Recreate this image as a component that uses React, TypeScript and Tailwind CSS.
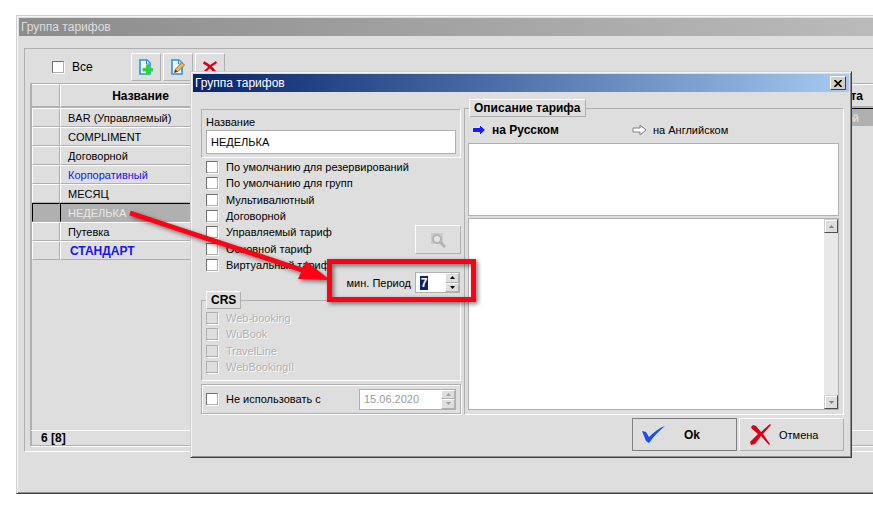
import { ReactNode, useState } from 'react';
import clsx from 'clsx';

interface Tariff {
  id: number;
  name: string;
  tone?: 'link' | 'strong';
}

const tariffs: Tariff[] = [
  { id: 1, name: 'BAR (Управляемый)' },
  { id: 2, name: 'COMPLIMENT' },
  { id: 3, name: 'Договорной' },
  { id: 4, name: 'Корпоративный', tone: 'link' },
  { id: 5, name: 'МЕСЯЦ' },
  { id: 6, name: 'НЕДЕЛЬКА' },
  { id: 7, name: 'Путевка' },
  { id: 8, name: 'СТАНДАРТ', tone: 'strong' },
];

const options = [
  'По умолчанию для резервирований',
  'По умолчанию для групп',
  'Мультивалютный',
  'Договорной',
  'Управляемый тариф',
  'Основной тариф',
  'Виртуальный тариф',
];

const channels = ['Web-booking', 'WuBook', 'TravelLine', 'WebBookingII'];

const raised = 'border border-t-white border-l-white border-r-[#b0b0b0] border-b-[#b0b0b0]';
const frame = 'border border-[#b0b0b0] shadow-[1px_1px_0_#fff,inset_1px_1px_0_#fff]';

function CheckRow({ label, disabled }: { label: string; disabled?: boolean }) {
  return (
    <label className={clsx('flex h-4 items-center gap-2', disabled && 'text-[#b0b0b0] [text-shadow:1px_1px_0_#fff]')}>
      <input
        type="checkbox"
        disabled={disabled}
        className="size-3 shrink-0 appearance-none border border-t-[#707070] border-r-[#b0b0b0] border-b-[#b0b0b0] border-l-[#707070] bg-white shadow-[1px_1px_0_#fff] checked:bg-[#0a246a] disabled:border-[#b0b0b0] disabled:bg-[#dedede]"
      />
      {label}
    </label>
  );
}

function ToolButton({ title, children }: { title: string; children: ReactNode }) {
  return (
    <button aria-label={title} className={clsx('flex h-7 w-[30px] items-center justify-center', raised)}>
      {children}
    </button>
  );
}

function PageShape() {
  return (
    <>
      <path d="M2 1h7l3 3v11H2z" fill="#fff" stroke="#2b8ee6" strokeWidth="1.6" />
      <path d="M8.500 1v4H12" fill="#cfe6fb" stroke="#2b8ee6" />
    </>
  );
}

function Spinner({ disabled }: { disabled?: boolean }) {
  const button = clsx('flex flex-1 items-center justify-center', raised);
  const fill = disabled ? '#a0a0a0' : '#000';
  return (
    <span className="flex w-[14px] shrink-0 flex-col bg-[#dedede]">
      <button aria-label="Больше" disabled={disabled} className={button}>
        <svg width="5" height="3" viewBox="0 0 5 3"><path d="M0 3h5L2.500 0z" fill={fill} /></svg>
      </button>
      <button aria-label="Меньше" disabled={disabled} className={button}>
        <svg width="5" height="3" viewBox="0 0 5 3"><path d="M0 0h5L2.500 3z" fill={fill} /></svg>
      </button>
    </span>
  );
}

function ScrollButton({ up }: { up?: boolean }) {
  return (
    <button
      aria-label={up ? 'Вверх' : 'Вниз'}
      disabled
      className="flex h-[14px] w-[14px] items-center justify-center border border-t-[#d0d0d0] border-r-[#505050] border-b-[#505050] border-l-[#d0d0d0] bg-[#dedede] shadow-[inset_1px_1px_0_#fff]"
    >
      <svg width="5" height="3" viewBox="0 0 5 3">
        <path d={up ? 'M0 3h5L2.500 0z' : 'M0 0h5L2.500 3z'} fill="#808080" />
      </svg>
    </button>
  );
}

function TariffList() {
  const [selected, setSelected] = useState(6);

  return (
    <div className="mt-3 ml-[5px] border-t border-b border-l border-t-[#b0b0b0] border-b-white border-l-[#b0b0b0] pb-1 pl-[5px]">
      <div className="flex h-[34px] items-start gap-[2px] pt-1 pl-[22px]">
        <label className="flex h-7 w-[77px] items-center gap-2 text-xs">
          <input
            type="checkbox"
            className="size-3 appearance-none border border-t-[#707070] border-r-[#b0b0b0] border-b-[#b0b0b0] border-l-[#707070] bg-white shadow-[1px_1px_0_#fff] checked:bg-[#0a246a]"
          />
          Все
        </label>
        <ToolButton title="Добавить">
          <svg width="16" height="16" viewBox="0 0 16 16">
            <PageShape />
            <path d="M8 5.500h3.500V9H15v3.500h-3.500V16H8v-3.500H4.500V9H8z" fill="#2fd23c" />
          </svg>
        </ToolButton>
        <ToolButton title="Изменить">
          <svg width="16" height="16" viewBox="0 0 16 16">
            <PageShape />
            <path d="M4.500 13.500l1-3.500L12 3.500l2.500 2.500L8 12.500z" fill="#f2b75c" stroke="#8a5a20" strokeWidth=".8" />
            <path d="M4.500 13.500l1-3 2 2z" fill="#333" />
          </svg>
        </ToolButton>
        <ToolButton title="Удалить">
          <svg width="14" height="12" viewBox="0 0 14 12" stroke="#d8001a" fill="none">
            <path d="M.5 1.500c4.500 2 8 5 11.500 9.500" strokeWidth="2.800" />
            <path d="M13.500 1C8 4 5 7 1.500 11" strokeWidth="2.200" />
          </svg>
        </ToolButton>
      </div>

      <div className="border-t border-b border-l border-t-[#b0b0b0] border-b-white border-l-[#b0b0b0] shadow-[inset_1px_0_0_#b0b0b0]">
        <div className="flex min-h-[346px] items-start pl-px">
          <table className="w-[190px] shrink-0 table-fixed border-separate border-spacing-0">
            <colgroup>
              <col className="w-[28px]" />
              <col />
            </colgroup>
            <thead>
              <tr className="h-6">
                <th className="border-t border-r border-b-2 border-t-white border-r-[#b0b0b0] border-b-[#b0b0b0]" />
                <th className="border-t border-b-2 border-l border-t-white border-b-[#b0b0b0] border-l-white pr-[2px] text-xs">Название</th>
              </tr>
            </thead>
            <tbody>
              {tariffs.map((tariff) => {
                const active = tariff.id === selected;
                const cell = active
                  ? 'border-t border-t-black border-l-black border-b-[#b0b0b0] bg-[#b0b0b0] text-[#e8e8e8]'
                  : 'border-t border-t-white border-l-white border-b-[#b0b0b0]';
                return (
                  <tr key={tariff.id} className="h-[19px]" onClick={() => setSelected(tariff.id)}>
                    <td className={clsx('border-r border-b border-l border-r-[#b0b0b0] p-0', cell)} />
                    <td
                      className={clsx(
                        'border-b border-l py-0 pr-0 whitespace-nowrap',
                        cell,
                        tariff.tone === 'strong' ? 'pl-[9px] text-xs font-bold' : 'pl-[7px]',
                        tariff.tone && !active && 'text-[#1414f0]',
                      )}
                    >
                      {tariff.name}
                    </td>
                  </tr>
                );
              })}
            </tbody>
          </table>
          <table className="grow border-separate border-spacing-0">
            <thead>
              <tr className="h-6">
                <th className="border-t border-b-2 border-t-white border-b-[#b0b0b0] py-0 pr-[10px] text-right text-xs">та</th>
              </tr>
            </thead>
            <tbody>
              <tr className="h-[18px]">
                <td className="border-t border-black bg-[#b0b0b0] py-0 pr-[14px] text-right text-[#e8e8e8]">ой</td>
              </tr>
            </tbody>
          </table>
        </div>
        <div className="h-4 border-t border-b border-t-white border-b-[#b0b0b0] pl-[10px] text-xs leading-[15px] font-bold">6 [8]</div>
      </div>
    </div>
  );
}

function TariffDialog() {
  const [name, setName] = useState('НЕДЕЛЬКА');

  return (
    <div
      role="dialog"
      aria-label="Группа тарифов"
      className="absolute top-[71px] right-[21px] left-[190px] border border-t-[#d0d0d0] border-r-[#404040] border-b-[#404040] border-l-[#d0d0d0] bg-[#dedede] p-[2px] shadow-[inset_1px_1px_0_#f4f4f4,inset_-1px_-1px_0_#909090]"
    >
      <header className="flex h-[18px] items-center justify-between bg-linear-to-r from-[#0a246a] to-[#a6caf0] pr-[3px] pl-[2px] text-white">
        <h2 className="text-xs">Группа тарифов</h2>
        <button aria-label="Закрыть" className="flex h-[14px] w-4 items-center justify-center border border-t-white border-r-[#404040] border-b-[#404040] border-l-white bg-[#d4d0c8]">
          <svg width="8" height="7" viewBox="0 0 8 7"><path d="M0.500 0l7 7M7.500 0l-7 7" stroke="#000" strokeWidth="1.600" /></svg>
        </button>
      </header>

      <div className="flex gap-[3px] pt-[7px] pr-[5px] pl-2">
        <div className="flex w-[260px] shrink-0 flex-col pt-[10px]">
          <div className="h-[49px] border border-t-[#b0b0b0] border-r-white border-b-white border-l-[#b0b0b0] px-1 pt-1">
            <label htmlFor="tariff-name" className="block h-4 leading-4">Название</label>
            <input
              id="tariff-name"
              value={name}
              onChange={(e) => setName(e.target.value)}
              className="block h-6 w-full border border-[#b0b0b0] bg-white px-1 outline-none"
            />
          </div>

          <div className="flex justify-between">
            <div className="flex h-[115px] flex-col justify-between pt-px pl-[5px]">
              {options.map((option) => (
                <CheckRow key={option} label={option} />
              ))}
            </div>
            <button aria-label="Поиск" disabled className={clsx('mt-[67px] flex h-[29px] w-[46px] items-center justify-center', raised)}>
              <svg width="18" height="18" viewBox="0 0 18 18" fill="none" stroke="#b4b4b4">
                <path d="M2 2h12v11H2z" fill="#cacaca" stroke="none" />
                <circle cx="8" cy="8" r="4" fill="#e4e4e4" strokeWidth="2" />
                <path d="M11 11l5 5" strokeWidth="3" />
              </svg>
            </button>
          </div>

          <div className="-mt-px flex justify-end pr-px">
            <label className="flex items-center gap-1">
              мин. Период
              <span className="flex h-[21px] w-[45px] border border-[#b0b0b0] bg-white">
                <span className="flex w-[29px] items-center pl-1">
                  <input type="text" defaultValue="7" className="h-[14px] w-2 bg-[#0a246a] text-center text-xs leading-[14px] font-bold text-white outline-none" />
                </span>
                <Spinner />
              </span>
            </label>
          </div>

          <fieldset className="-mt-[2px] border border-t-[#b0b0b0] border-r-white border-b-white border-l-[#b0b0b0] pr-2 pb-[5px] pl-1">
            <legend className={clsx('h-[18px] px-1 text-xs leading-4 font-bold', raised)}>CRS</legend>
            <div className="flex h-[66px] flex-col justify-between pt-px">
              {channels.map((channel) => (
                <CheckRow key={channel} label={channel} disabled />
              ))}
            </div>
          </fieldset>

          <div className={clsx('mt-[3px] flex h-[30px] items-center justify-between pr-1 pl-1', frame)}>
            <CheckRow label="Не использовать с" />
            <span className="flex h-[21px] w-[97px] border border-[#b0b0b0] bg-white">
              <input aria-label="Дата" disabled defaultValue="15.06.2020" className="min-w-0 flex-1 pl-1 text-[#9a9a9a]" />
              <Spinner disabled />
            </span>
          </div>
        </div>

        <fieldset className="flex min-w-0 flex-1 flex-col border border-t-[#b0b0b0] border-r-white border-b-white border-l-[#b0b0b0] pr-1 pb-1 pl-[3px]">
          <legend className={clsx('ml-px h-[18px] px-1 text-xs leading-4 font-bold', raised)}>Описание тарифа</legend>
          <div className="flex h-[26px] items-center pl-1">
            <button className="flex w-40 items-center gap-[6px] text-xs font-bold">
              <svg width="14" height="12" viewBox="0 0 14 12"><path d="M.5 3.500h7V.6L13.500 6l-6 5.400V8.500h-7z" fill="#1a1aff" stroke="#fff" strokeWidth=".8" /></svg>
              на Русском
            </button>
            <button className="flex items-center gap-[6px]">
              <svg width="15" height="12" viewBox="0 0 15 12"><path d="M1 4h7V1l6 5-6 5V8H1z" fill="#fff" stroke="#808080" /></svg>
              на Английском
            </button>
          </div>
          <textarea aria-label="Краткое описание" className="block h-[73px] w-full resize-none border border-[#b0b0b0] bg-white p-1 outline-none" />
          <div className="mt-[2px] flex h-[192px] border border-[#b0b0b0] bg-white">
            <textarea aria-label="Описание" className="min-w-0 flex-1 resize-none p-1 outline-none" />
            <div className="flex w-[14px] flex-col justify-between bg-[#e8e8e8]">
              <ScrollButton up />
              <ScrollButton />
            </div>
          </div>
        </fieldset>
      </div>

      <footer className="flex justify-end gap-[2px] px-[5px] pt-[3px] pb-1">
        <button className="flex h-[33px] w-[105px] items-center border border-[#808080] pl-[9px] text-xs font-bold">
          <svg width="24" height="18" viewBox="0 0 24 18"><path d="M0 5l4 1 3 5C12 6 17 2 23 0 17 5 12 10 7 17L4 15z" fill="#1c4cf0" /></svg>
          <span className="ml-[18px]">Ok</span>
        </button>
        <button className={clsx('flex h-[33px] w-[105px] items-center gap-[7px] pl-[10px]', raised)}>
          <svg width="22" height="22" viewBox="0 0 22 22" fill="#d8001a">
            <path d="M1 3l2-2 3 1 5 6 9-8 1 1-8 9 7 10-1 1-8-9-6 8-4 1-1-3 8-8-6-5z" />
          </svg>
          Отмена
        </button>
      </footer>
    </div>
  );
}

export default function App() {
  return (
    <div className="relative min-h-screen overflow-hidden bg-white pt-[15px] pl-4 font-['Liberation_Sans',Arial,sans-serif] text-[11px] leading-4 text-black">
      <main className="border-t border-b border-l border-t-[#d0d0d0] border-b-[#404040] border-l-[#d0d0d0] bg-[#dedede] pt-[2px] pb-[41px] pl-[2px] shadow-[inset_1px_1px_0_#f4f4f4,inset_0_-1px_0_#909090]">
        <h1 className="flex h-[18px] items-center bg-linear-to-r from-[#8c8c8c] to-[#bababa] pl-[2px] text-xs text-[#dedede]">Группа тарифов</h1>
        <TariffList />
      </main>

      <TariffDialog />

      {/* callout from the selected row to the period field */}
      <svg
        width="360"
        height="110"
        viewBox="0 0 360 110"
        className="pointer-events-none absolute top-[200px] left-[125px] drop-shadow-[2px_2px_2px_rgba(0,0,0,0.5)]"
      >
        <path d="M5 13L180 71" stroke="#ff0014" strokeWidth="5" />
        <path d="M181 61l24 19-32-1z" fill="#ff0014" />
        <path d="M204.500 61.500h144v38h-144z" fill="none" stroke="#ff0014" strokeWidth="5" />
      </svg>
    </div>
  );
}
